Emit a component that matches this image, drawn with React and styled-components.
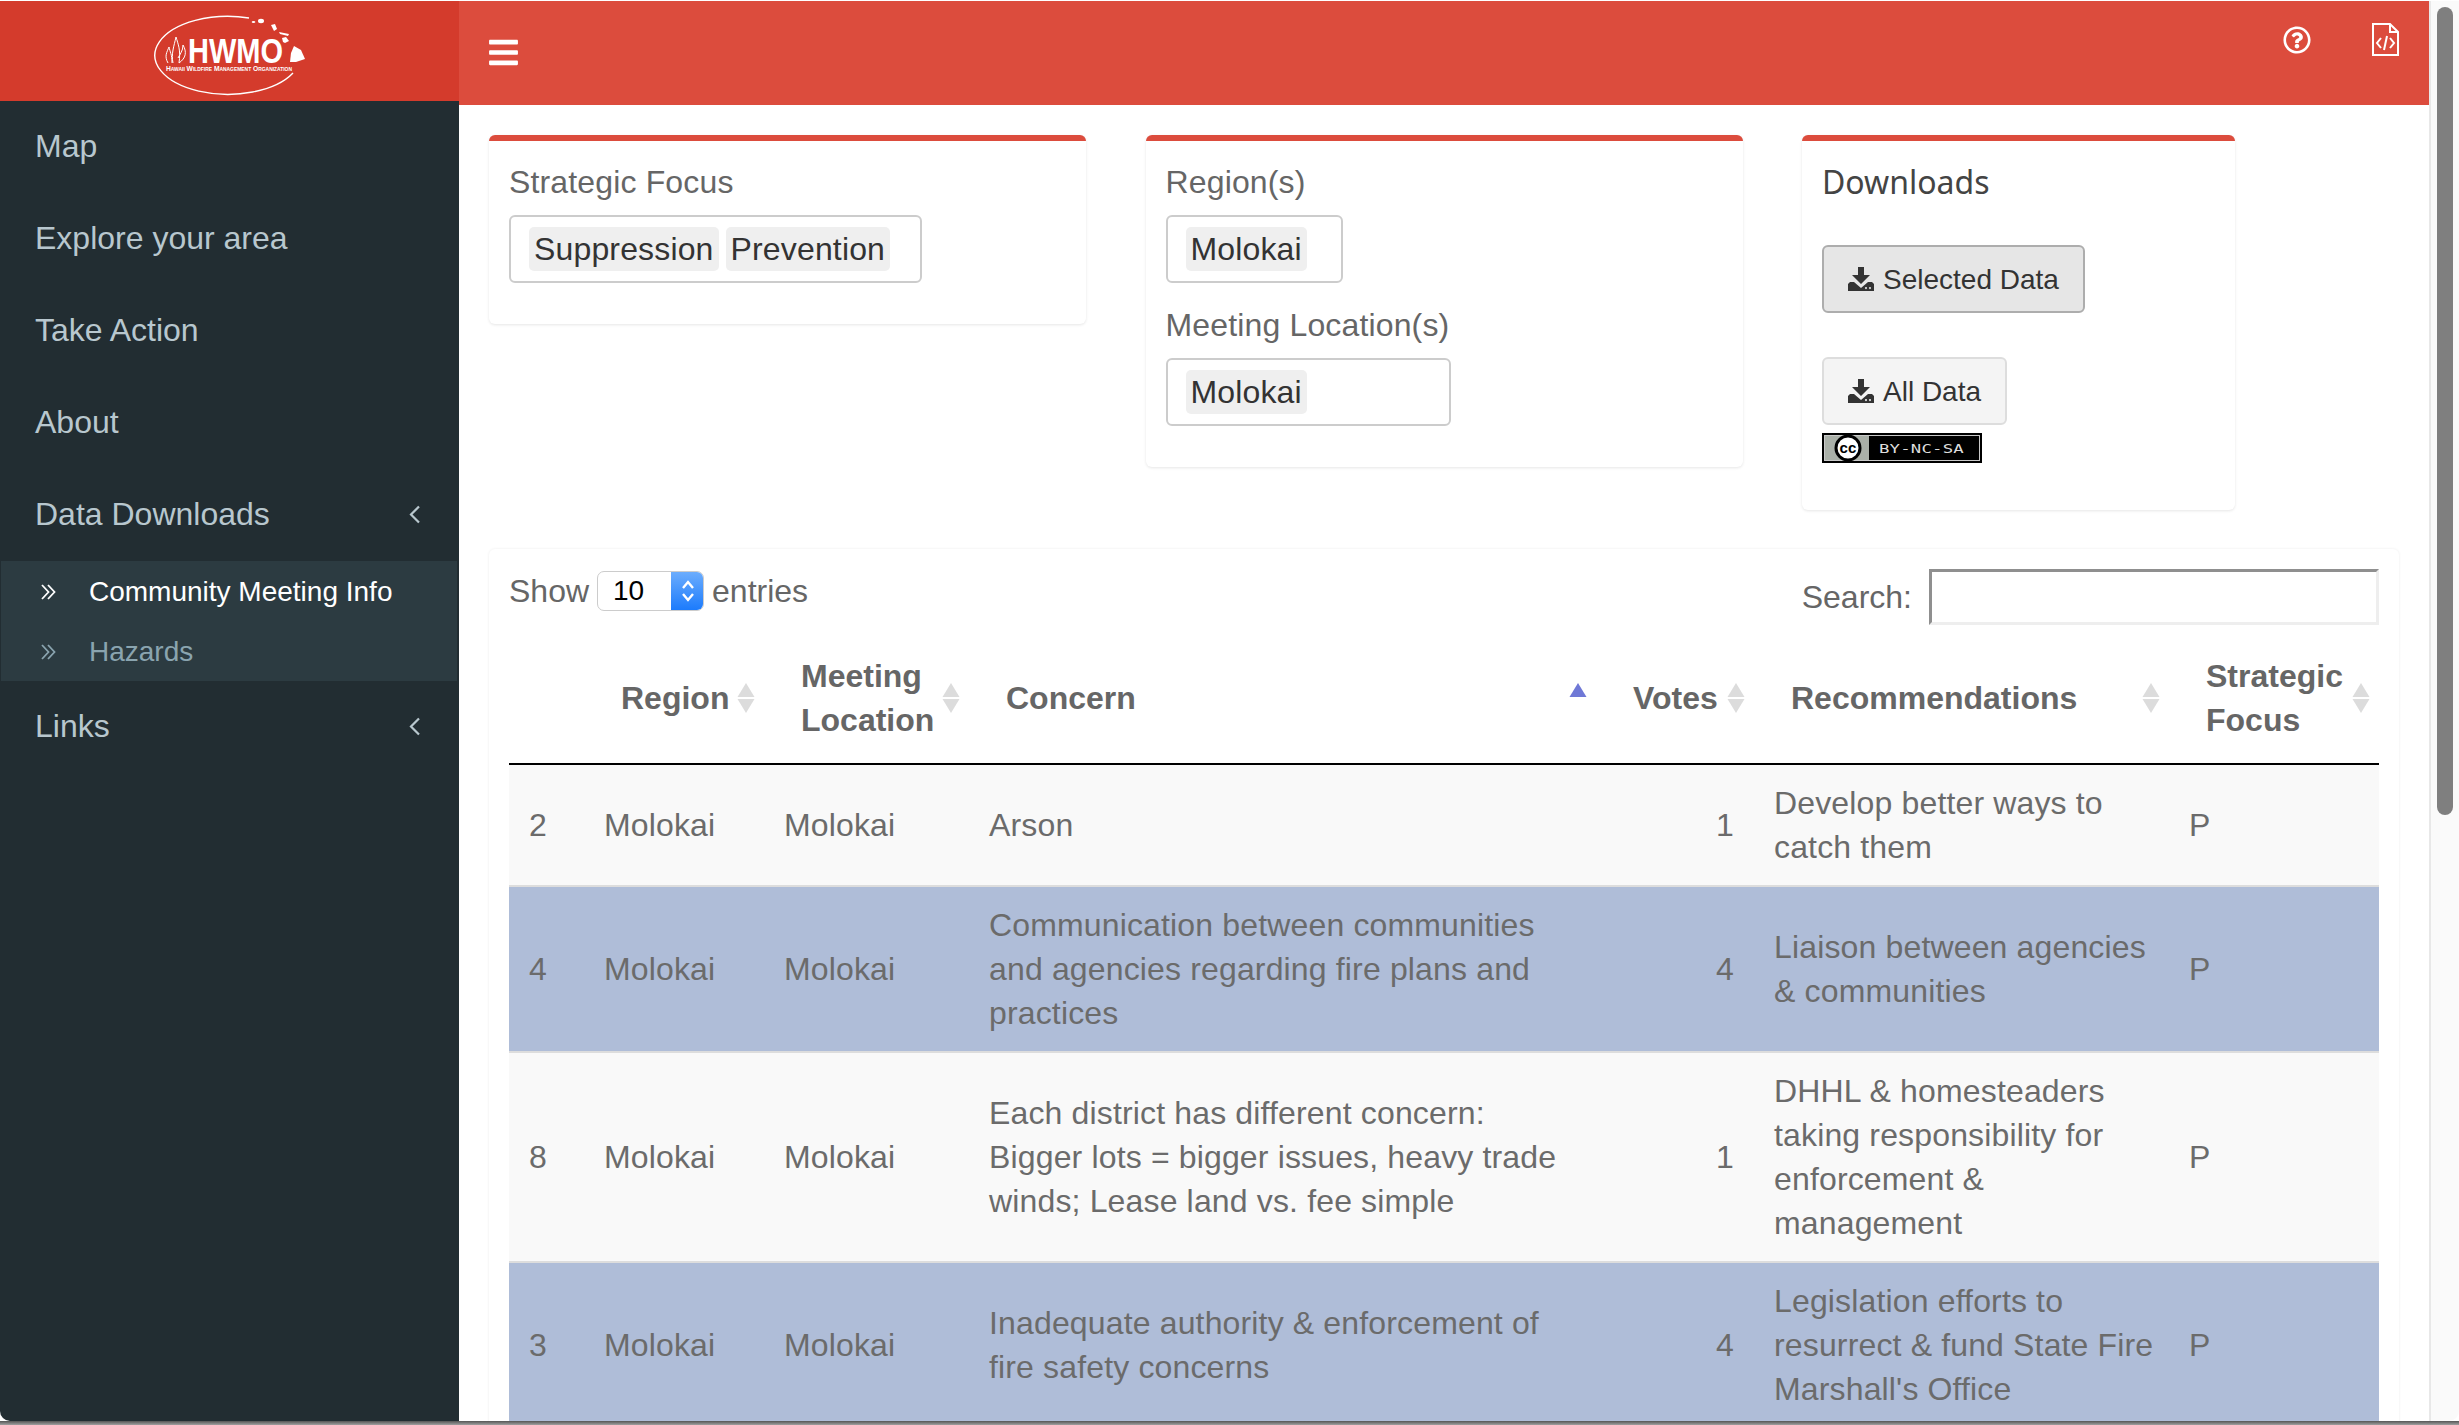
import React from "react";
import styled, { createGlobalStyle } from "styled-components";
import { FaBars, FaRegQuestionCircle } from "react-icons/fa";

const GlobalStyle = createGlobalStyle`
  html, body {
    margin: 0;
    padding: 0;
    height: 1425px;
    overflow: hidden;
    background: linear-gradient(to bottom, #fff 0, #fff 1421px, #555 1421px, #a0a0a0 1425px);
  }
  * { box-sizing: border-box; }
`;

const menu = [
  { label: "Map" },
  { label: "Explore your area" },
  { label: "Take Action" },
  { label: "About" },
  { label: "Data Downloads", arrow: true, sub: [
    { label: "Community Meeting Info", active: true },
    { label: "Hazards" },
  ] },
  { label: "Links", arrow: true },
];

const rows = [
  { id: 2, concern: "Arson", votes: 1, rec: "Develop better ways to catch them" },
  { id: 4, concern: "Communication between communities and agencies regarding fire plans and practices", votes: 4, rec: "Liaison between agencies & communities", selected: true },
  { id: 8, concern: "Each district has different concern: Bigger lots = bigger issues, heavy trade winds; Lease land vs. fee simple", votes: 1, rec: "DHHL & homesteaders taking responsibility for enforcement & management" },
  { id: 3, concern: "Inadequate authority & enforcement of fire safety concerns", votes: 4, rec: "Legislation efforts to resurrect & fund State Fire Marshall's Office", selected: true },
];

function Logo() {
  return (
    <svg width="160" height="84" viewBox="0 0 160 84">
      <path d="M99 4 A73 39 0 1 0 143 59" fill="none" stroke="#fff" strokeWidth="1.4" />
      <g fill="#fff">
        <ellipse cx="103.5" cy="8" rx="1.8" ry="1" />
        <ellipse cx="111" cy="7" rx="3" ry="2.2" />
        <path d="M121 11 L125 10 L127 15 L124 17 Z" />
        <path d="M129 18 L139 20 L138 22 L130 20 Z" />
        <path d="M132 24 L136 23 L139 27 L135 29 L133 28 Z" />
        <path d="M144 32 L151 36 L155 45 L146 48 L140 48 L141 39 Z" />
      </g>
      <g fill="none" stroke="#fff" strokeWidth="1">
        <path d="M18 49 C14 42 17 38 19 33 C20 38 22 40 22 49" />
        <path d="M23 49 C21 40 24 32 26 23 C28 30 31 36 29 49" />
        <path d="M29 49 C36 44 37 38 33 31 C33 37 30 40 28 44" />
      </g>
      <text x="38" y="49" fill="#fff" fontFamily="Liberation Sans, sans-serif" fontWeight="700" fontSize="35" textLength="95" lengthAdjust="spacingAndGlyphs">HWMO</text>
      <text x="16" y="57" fill="#fff" fontFamily="Liberation Sans, sans-serif" fontWeight="700" fontSize="6.8" textLength="126" lengthAdjust="spacingAndGlyphs" style={{ fontVariant: "small-caps" }}>Hawaii Wildfire Management Organization</text>
    </svg>
  );
}

function AngleLeft() {
  return (
    <svg width="13" height="19" viewBox="0 0 13 19" fill="none" stroke="currentColor" strokeWidth="2.2">
      <path d="M11 1.5 L3 9.5 L11 17.5" />
    </svg>
  );
}

function DoubleChevron() {
  return (
    <svg width="15" height="16" viewBox="0 0 15 16" fill="none" stroke="currentColor" strokeWidth="1.8">
      <path d="M1 1 L7.5 8 L1 15" />
      <path d="M7 1 L13.5 8 L7 15" />
    </svg>
  );
}

function FileCode() {
  return (
    <svg width="27" height="33" viewBox="0 0 27 33" fill="none" stroke="#fff" strokeWidth="2">
      <path d="M1 1 H18 L26 9 V32 H1 Z" />
      <path d="M18 1 V9 H26" />
      <path d="M9 15 L5 20 L9 25" />
      <path d="M18 15 L22 20 L18 25" />
      <path d="M15 13 L12 27" />
    </svg>
  );
}

function DownloadIcon() {
  return (
    <svg width="26" height="24" viewBox="0 0 26 24" fill="currentColor">
      <path d="M10 0 H16 V8 H22 L13 17 L4 8 H10 Z" />
      <path d="M0 17 L2 15 H6 L13 21 L20 15 H24 L26 17 V24 H0 Z M18 20 a1 1 0 1 0 0.01 0 Z M22 20 a1 1 0 1 0 0.01 0 Z" fillRule="evenodd" />
    </svg>
  );
}

function CcBadge() {
  return (
    <svg width="160" height="30" viewBox="0 0 160 30">
      <rect width="160" height="30" fill="#000" />
      <rect x="2.5" y="2.5" width="155" height="25" fill="none" stroke="#c9c9c9" />
      <rect x="3" y="3" width="44" height="24" fill="#aab0a8" />
      <circle cx="26" cy="15" r="12" fill="#fff" stroke="#000" strokeWidth="3" />
      <text x="26" y="20" textAnchor="middle" fontFamily="Liberation Sans, sans-serif" fontWeight="700" fontSize="15" fill="#000">cc</text>
      <text x="57" y="20" fontFamily="DejaVu Sans Mono, monospace" fontSize="13" fill="#ddd" textLength="85" lengthAdjust="spacingAndGlyphs">BY-NC-SA</text>
    </svg>
  );
}

function SortIcon({ active }) {
  return (
    <SortWrap viewBox="0 0 18 30" width="18" height="30">
      <polygon points="9,0 17.5,14 0.5,14" fill={active ? "#6f78d6" : "#dcdcdc"} />
      {!active && <polygon points="9,30 17.5,16 0.5,16" fill="#dcdcdc" />}
    </SortWrap>
  );
}

export default function App() {
  return (
    <>
      <GlobalStyle />
      <Frame>
        <Sidebar>
          <LogoBar><Logo /></LogoBar>
          <Menu>
            {menu.map((item) => (
              <li key={item.label}>
                <MenuItem>
                  {item.label}
                  {item.arrow && <AngleLeft />}
                </MenuItem>
                {item.sub && (
                  <SubMenu>
                    {item.sub.map((s) => (
                      <SubItem key={s.label} $active={s.active}>
                        <DoubleChevron />
                        {s.label}
                      </SubItem>
                    ))}
                  </SubMenu>
                )}
              </li>
            ))}
          </Menu>
        </Sidebar>
        <Main>
          <Navbar>
            <FaBars size={33} color="#fff" />
            <NavIcons>
              <FaRegQuestionCircle size={28} color="#fff" />
              <FileCode />
            </NavIcons>
          </Navbar>
          <Content>
            <BoxRow>
              <Box>
                <Label>Strategic Focus</Label>
                <Selectize>
                  <Chip>Suppression</Chip>
                  <Chip>Prevention</Chip>
                </Selectize>
              </Box>
              <Box>
                <Label>Region(s)</Label>
                <Selectize $width={177}>
                  <Chip>Molokai</Chip>
                </Selectize>
                <Label $spaced>Meeting Location(s)</Label>
                <Selectize $width={285}>
                  <Chip>Molokai</Chip>
                </Selectize>
              </Box>
              <DownloadBox>
                <BoxTitle>Downloads</BoxTitle>
                <DownloadButton $pressed><DownloadIcon /><span>Selected Data</span></DownloadButton>
                <DownloadButton><DownloadIcon /><span>All Data</span></DownloadButton>
                <BadgeLine><CcBadge /></BadgeLine>
              </DownloadBox>
            </BoxRow>
            <TableBox>
              <TableTools>
                <LengthControl>
                  Show
                  <LengthSelect>
                    <span>10</span>
                    <Spinner>
                      <svg width="16" height="28" viewBox="0 0 16 28" fill="none" stroke="#fff" strokeWidth="2.4">
                        <path d="M3 11 L8 5 L13 11" />
                        <path d="M3 17 L8 23 L13 17" />
                      </svg>
                    </Spinner>
                  </LengthSelect>
                  entries
                </LengthControl>
                <SearchControl>
                  Search:
                  <SearchInput type="text" />
                </SearchControl>
              </TableTools>
              <DataTable>
                <colgroup>
                  <col width="75" />
                  <col width="180" />
                  <col width="205" />
                  <col width="627" />
                  <col width="158" />
                  <col width="415" />
                  <col width="210" />
                </colgroup>
                <thead>
                  <tr>
                    <HeadCell />
                    <HeadCell>Region<SortIcon /></HeadCell>
                    <HeadCell>Meeting Location<SortIcon /></HeadCell>
                    <HeadCell>Concern<SortIcon active /></HeadCell>
                    <HeadCell>Votes<SortIcon /></HeadCell>
                    <HeadCell>Recommendations<SortIcon /></HeadCell>
                    <HeadCell>Strategic Focus<SortIcon /></HeadCell>
                  </tr>
                </thead>
                <tbody>
                  {rows.map((r) => (
                    <Row key={r.id} $selected={r.selected}>
                      <Cell>{r.id}</Cell>
                      <Cell>Molokai</Cell>
                      <Cell>Molokai</Cell>
                      <ConcernCell>{r.concern}</ConcernCell>
                      <VotesCell>{r.votes}</VotesCell>
                      <Cell>{r.rec}</Cell>
                      <Cell>P</Cell>
                    </Row>
                  ))}
                </tbody>
              </DataTable>
            </TableBox>
          </Content>
        </Main>
        <ScrollTrack><ScrollThumb /></ScrollTrack>
      </Frame>
    </>
  );
}

const Frame = styled.div`
  display: flex;
  height: 1421px;
  padding-top: 1px;
  overflow: hidden;
  background: #fff;
  border-radius: 0 0 10px 10px;
  font-family: "Liberation Sans", Arial, sans-serif;
  font-size: 32px;
  line-height: 44px;
  color: #666;
`;
const Sidebar = styled.aside`
  flex: 0 0 459px;
  background: #222d32;
`;
const LogoBar = styled.div`
  display: flex;
  justify-content: center;
  height: 100px;
  padding-top: 13px;
  background: #d43b2c;
`;
const Menu = styled.ul`
  list-style: none;
  margin: 0;
  padding: 0;
`;
const MenuItem = styled.div`
  display: flex;
  align-items: center;
  justify-content: space-between;
  height: 92px;
  padding: 0 38px 2px 35px;
  color: #b8c7ce;
  font-size: 32px;
`;
const SubMenu = styled.div`
  margin: 0 2px 0 1px;
  background: #2c3b41;
`;
const SubItem = styled.div`
  display: flex;
  align-items: center;
  gap: 33px;
  height: 60px;
  padding: 1px 0 0 40px;
  font-size: 28px;
  color: ${(p) => (p.$active ? "#fff" : "#8aa4af")};
`;
const Main = styled.main`
  flex: 1;
  min-width: 0;
`;
const Navbar = styled.div`
  display: flex;
  justify-content: space-between;
  height: 104px;
  padding: 35px 30px 0 28px;
  background: #dc4c3d;
`;
const NavIcons = styled.div`
  display: flex;
  align-items: center;
  gap: 61px;
  height: 33px;
  margin-top: -13px;
`;
const Content = styled.div`
  padding: 30px 30px 0 30px;
`;
const BoxRow = styled.div`
  display: grid;
  grid-template-columns: 597px 597px 433px;
  column-gap: 59.5px;
  align-items: start;
  margin-bottom: 39px;
`;
const Box = styled.section`
  padding: 19px 20px 41px;
  background: #fff;
  border-top: 6px solid #dc4c3d;
  border-radius: 6px;
  box-shadow: 0 1px 3px rgba(0, 0, 0, 0.1);
  letter-spacing: 0.15px;
`;
const DownloadBox = styled(Box)`
  padding-bottom: 47px;
`;
const Label = styled.div`
  margin-top: ${(p) => (p.$spaced ? "20px" : "0")};
  margin-bottom: 11px;
`;
const BoxTitle = styled.h3`
  margin: 0 0 41px;
  font-family: "Noto Sans", sans-serif;
  font-size: 32px;
  font-weight: 400;
  line-height: 44px;
  letter-spacing: 0;
  color: #444;
`;
const Selectize = styled.div`
  display: flex;
  gap: 7px;
  width: ${(p) => (p.$width ? `${p.$width}px` : "413px")};
  padding: 10px 18px;
  border: 2px solid #ccc;
  border-radius: 6px;
  background: #fff;
`;
const Chip = styled.span`
  padding: 0 5px;
  background: #efefef;
  border-radius: 5px;
  color: #333;
`;
const DownloadButton = styled.button`
  display: flex;
  align-items: center;
  gap: 9px;
  height: 68px;
  margin-bottom: 44px;
  padding: 0 24px;
  font-family: inherit;
  font-size: 28px;
  color: #333;
  background: ${(p) => (p.$pressed ? "#e6e6e6" : "#f4f4f4")};
  border: 2px solid ${(p) => (p.$pressed ? "#adadad" : "#ddd")};
  border-radius: 6px;
  & + & { margin-bottom: 8px; }
  span { padding-top: 2px; }
`;
const BadgeLine = styled.div`
  display: flex;
  height: 30px;
`;
const TableBox = styled.section`
  padding: 20px;
  background: #fff;
  border-radius: 6px;
  box-shadow: 0 0 3px rgba(0, 0, 0, 0.08);
`;
const TableTools = styled.div`
  display: flex;
  justify-content: space-between;
  align-items: flex-start;
  height: 56px;
`;
const LengthControl = styled.label`
  display: flex;
  align-items: center;
  gap: 8px;
  height: 44px;
`;
const LengthSelect = styled.div`
  display: flex;
  justify-content: space-between;
  width: 107px;
  height: 40px;
  overflow: hidden;
  background: #fff;
  border: 1px solid #ccc;
  border-radius: 7px;
  font-size: 28px;
  line-height: 38px;
  color: #000;
  span { padding-left: 15px; }
`;
const Spinner = styled.div`
  display: flex;
  align-items: center;
  justify-content: center;
  width: 33px;
  margin: -1px -1px -1px 0;
  background: linear-gradient(to bottom, #6eaefd, #1a7afc);
`;
const SearchControl = styled.label`
  display: flex;
  align-items: center;
  gap: 17px;
`;
const SearchInput = styled.input`
  width: 450px;
  height: 56px;
  padding: 0;
  background: #fff;
  border: 3px solid;
  border-color: #8f8f8f #eee #eee #8f8f8f;
`;
const DataTable = styled.table`
  width: 1870px;
  margin-top: 8px;
  table-layout: fixed;
  border-collapse: separate;
  border-spacing: 0;
`;
const HeadCell = styled.th`
  position: relative;
  padding: 21px 30px 21px 37px;
  text-align: left;
  font-weight: 700;
  color: #666;
  border-bottom: 2px solid #000;
`;
const SortWrap = styled.svg`
  position: absolute;
  top: 50%;
  right: 9px;
  transform: translateY(-50%);
`;
const Row = styled.tr`
  background: ${(p) => (p.$selected ? "#afbdd8" : "#f9f9f9")};
  td { border-top: 2px solid #ddd; }
  &:first-child td { border-top: 0; }
`;
const Cell = styled.td`
  padding: 16px 12px 16px 20px;
  vertical-align: middle;
  color: #6b6b6b;
  letter-spacing: 0.15px;
`;
const ConcernCell = styled(Cell)`
  padding-right: 21px;
`;
const VotesCell = styled(Cell)`
  padding-right: 20px;
  text-align: right;
`;
const ScrollTrack = styled.div`
  flex: 0 0 30px;
  padding: 6px 6px 0 6px;
  background: #fafafa;
  border-left: 2px solid #e8e8e8;
`;
const ScrollThumb = styled.div`
  height: 808px;
  background: #7f7f7f;
  border-radius: 8px;
`;
